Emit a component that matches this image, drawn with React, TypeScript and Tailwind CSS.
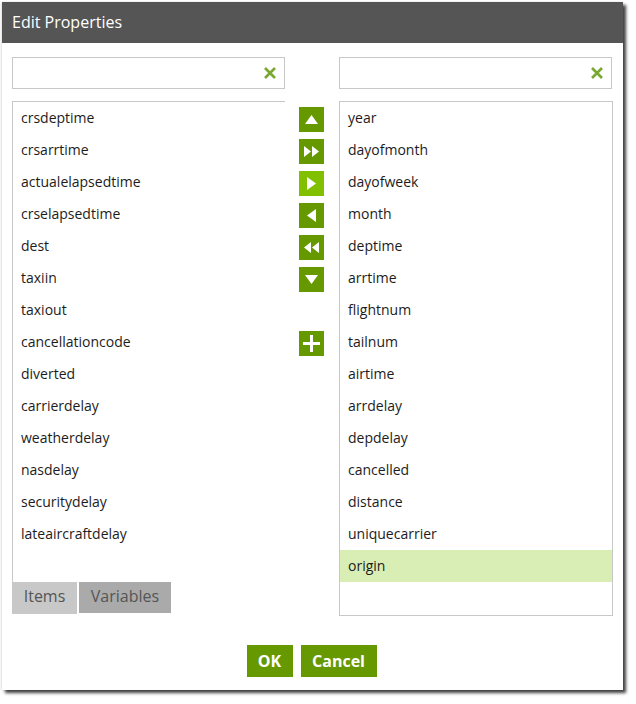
import type { ReactNode } from 'react'

const leftItems = [
  'crsdeptime',
  'crsarrtime',
  'actualelapsedtime',
  'crselapsedtime',
  'dest',
  'taxiin',
  'taxiout',
  'cancellationcode',
  'diverted',
  'carrierdelay',
  'weatherdelay',
  'nasdelay',
  'securitydelay',
  'lateaircraftdelay',
]

const rightItems = [
  'year',
  'dayofmonth',
  'dayofweek',
  'month',
  'deptime',
  'arrtime',
  'flightnum',
  'tailnum',
  'airtime',
  'arrdelay',
  'depdelay',
  'cancelled',
  'distance',
  'uniquecarrier',
  'origin',
]

function ClearIcon() {
  return (
    <svg width="14" height="14" viewBox="0 0 14 14">
      <path d="M2 2 L12 12 M12 2 L2 12" stroke="#78a830" strokeWidth="2.6" strokeLinecap="butt" />
    </svg>
  )
}

function SearchBox({ width }: { width: string }) {
  return (
    <div className={`${width} h-8 border border-[#c8c8c8] flex items-center justify-end pr-[7px]`}>
      <ClearIcon />
    </div>
  )
}

function MoveButton({ children, active }: { children: ReactNode; active?: boolean }) {
  return (
    <button
      className={`w-[25px] h-[25px] flex items-center justify-center ${active ? 'bg-[#80c000]' : 'bg-[#669900]'}`}
    >
      <svg width="25" height="25" viewBox="0 0 25 25">
        {children}
      </svg>
    </button>
  )
}

export default function App() {
  return (
    <div className="w-[636px] h-[704px] bg-white font-['Open_Sans',sans-serif] relative">
      <div className="absolute left-[2px] top-[2px] w-[621px] h-[688px] bg-white flex flex-col shadow-[3px_3px_3px_rgba(0,0,0,0.75),-1px_0_2px_rgba(0,0,0,0.12)]">
        {/* Title */}
        <div className="h-[41px] bg-[#555555] flex items-center pl-[10px] pb-[1px] text-white text-[16px]">
          Edit Properties
        </div>

        <div className="flex px-[10px] pt-[14px]">
          {/* Left column */}
          <div className="w-[273px] flex flex-col">
            <SearchBox width="w-[273px]" />
            <div className="mt-[12px] h-[481px] border-t border-l border-[#c8c8c8]">
              {leftItems.map((it) => (
                <div key={it} className="h-8 flex items-center pl-[8px] pb-[2px] text-[14px] text-[#1c1c1c]">
                  {it}
                </div>
              ))}
            </div>
            <div className="flex gap-[2px] h-8">
              <div className="w-[65px] h-8 bg-[#c8c8c8] flex items-center justify-center pb-[5px] text-[16px] text-[#555]">
                Items
              </div>
              <div className="w-[92px] h-[31px] bg-[#aaaaaa] flex items-center justify-center pb-[3px] text-[16px] text-[#555]">
                Variables
              </div>
            </div>
          </div>

          {/* Move buttons */}
          <div className="w-[54px] flex flex-col items-start pl-[14px] pt-[50px] gap-[7px]">
            <MoveButton>
              <path d="M6 17 L12.5 8 L19 17 Z" fill="white" />
            </MoveButton>
            <MoveButton>
              <path d="M5 7 L12 12.5 L5 18 Z M13 7 L20 12.5 L13 18 Z" fill="white" />
            </MoveButton>
            <MoveButton active>
              <path d="M8 6 L17 12.5 L8 19 Z" fill="white" />
            </MoveButton>
            <MoveButton>
              <path d="M17 6 L8 12.5 L17 19 Z" fill="white" />
            </MoveButton>
            <MoveButton>
              <path d="M12 7 L5 12.5 L12 18 Z M20 7 L13 12.5 L20 18 Z" fill="white" />
            </MoveButton>
            <MoveButton>
              <path d="M6 8 L12.5 17 L19 8 Z" fill="white" />
            </MoveButton>
            <div className="h-[25px]" />
            <MoveButton>
              <path d="M11 4 H14 V11 H21 V14 H14 V21 H11 V14 H4 V11 H11 Z" fill="white" />
            </MoveButton>
          </div>

          {/* Right column */}
          <div className="w-[274px] flex flex-col">
            <SearchBox width="w-[273px]" />
            <div className="mt-[12px] h-[515px] border border-[#c8c8c8]">
              {rightItems.map((it) => (
                <div
                  key={it}
                  className={`h-8 flex items-center pl-[8px] pb-[2px] text-[14px] text-[#1c1c1c] ${it === 'origin' ? 'bg-[#d9eeb4]' : ''}`}
                >
                  {it}
                </div>
              ))}
            </div>
          </div>
        </div>

        <div className="flex justify-center gap-[8px] mt-[29px] pr-[2px]">
          <button className="w-[46px] h-8 bg-[#669900] text-white font-bold text-[16px] pb-[1px]">OK</button>
          <button className="w-[76px] h-8 bg-[#669900] text-white font-bold text-[16px] pb-[1px]">Cancel</button>
        </div>
      </div>
    </div>
  )
}
